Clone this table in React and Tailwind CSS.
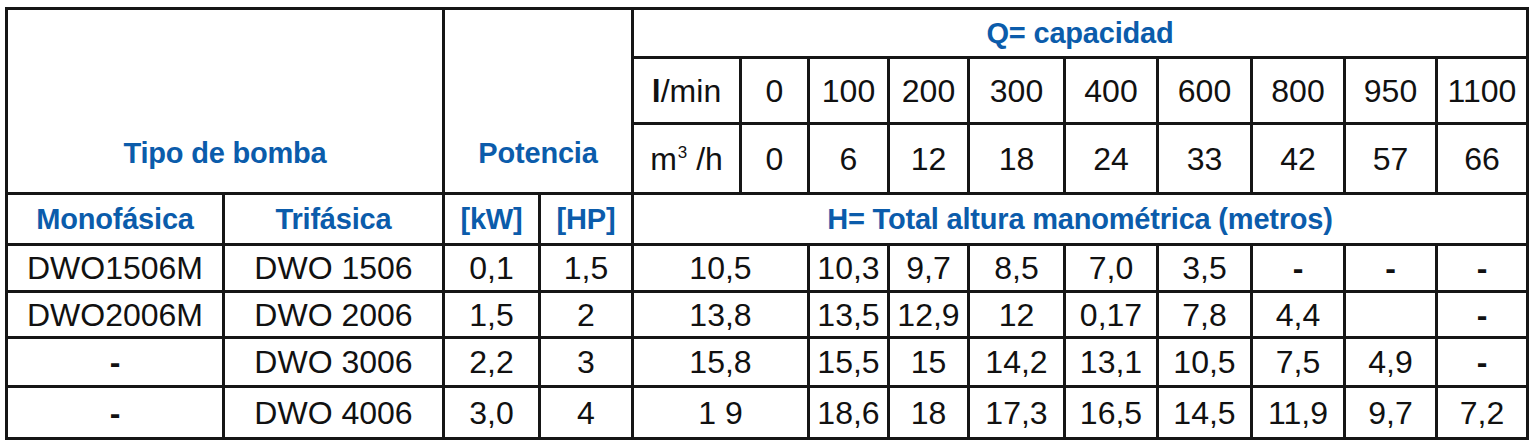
const widths = ['w-[217px]', 'w-[220px]', 'w-[96px]', 'w-[93px]', 'w-[108px]', 'w-[68px]', 'w-[80px]', 'w-[80px]', 'w-[96px]', 'w-[93px]', 'w-[94px]', 'w-[93px]', 'w-[92px]', 'w-[91px]'];

const lpm = ['0', '100', '200', '300', '400', '600', '800', '950', '1100'];
const m3h = ['0', '6', '12', '18', '24', '33', '42', '57', '66'];

const rows = [
  { mono: 'DWO1506M', tri: 'DWO 1506', kw: '0,1', hp: '1,5', h: ['10,5', '10,3', '9,7', '8,5', '7,0', '3,5', '-', '-', '-'], height: 'h-[47px]' },
  { mono: 'DWO2006M', tri: 'DWO 2006', kw: '1,5', hp: '2', h: ['13,8', '13,5', '12,9', '12', '0,17', '7,8', '4,4', '', '-'], height: 'h-[46px]' },
  { mono: '-', tri: 'DWO 3006', kw: '2,2', hp: '3', h: ['15,8', '15,5', '15', '14,2', '13,1', '10,5', '7,5', '4,9', '-'], height: 'h-[49px]' },
  { mono: '-', tri: 'DWO 4006', kw: '3,0', hp: '4', h: ['1 9', '18,6', '18', '17,3', '16,5', '14,5', '11,9', '9,7', '7,2'], height: 'h-[52px]' },
];

const cell = 'border-[3px] border-[#161616] text-center align-middle p-0 leading-none';
const head = 'font-bold text-[29px] text-[#0b5cab] tracking-[-0.2px]';

// dashes in the sheet are printed heavier than the figures
const Val = ({ v }) => (v === '-' ? <span className="font-bold">-</span> : v);

export default function App() {
  return (
    <div className="min-h-screen bg-white pt-[7px] pl-[5px] font-['Liberation_Sans',Arial,sans-serif] text-[32px] text-[#111]">
      <table className="border-collapse table-fixed w-[1521px]">
        <colgroup>
          {widths.map((w, i) => (
            <col key={i} className={w} />
          ))}
        </colgroup>
        <tbody>
          <tr className="h-[49px]">
            <td colSpan={2} rowSpan={3} className={`${cell} ${head} !align-bottom pb-[24px]`}>
              Tipo de bomba
            </td>
            <td colSpan={2} rowSpan={3} className={`${cell} ${head} !align-bottom pb-[24px]`}>
              Potencia
            </td>
            <td colSpan={10} className={`${cell} ${head}`}>
              Q= capacidad
            </td>
          </tr>
          <tr className="h-[66px]">
            <td className={cell}>
              <span className="font-bold">l</span>/min
            </td>
            {lpm.map((v, i) => (
              <td key={i} className={cell}>{v}</td>
            ))}
          </tr>
          <tr className="h-[70px]">
            <td className={cell}>
              m<span className="inline-block text-[17px] relative -top-[12px] ml-[1px]">3</span> /h
            </td>
            {m3h.map((v, i) => (
              <td key={i} className={cell}>{v}</td>
            ))}
          </tr>
          <tr className="h-[51px]">
            <td className={`${cell} ${head}`}>Monofásica</td>
            <td className={`${cell} ${head}`}>Trifásica</td>
            <td className={`${cell} ${head}`}>[kW]</td>
            <td className={`${cell} ${head}`}>[HP]</td>
            <td colSpan={10} className={`${cell} ${head}`}>
              H= Total altura manométrica (metros)
            </td>
          </tr>
          {rows.map((r, i) => (
            <tr key={i} className={r.height}>
              <td className={cell}><Val v={r.mono} /></td>
              <td className={cell}>{r.tri}</td>
              <td className={cell}>{r.kw}</td>
              <td className={cell}>{r.hp}</td>
              {r.h.map((v, j) => (
                <td key={j} colSpan={j === 0 ? 2 : 1} className={cell}>
                  <Val v={v} />
                </td>
              ))}
            </tr>
          ))}
        </tbody>
      </table>
    </div>
  );
}
